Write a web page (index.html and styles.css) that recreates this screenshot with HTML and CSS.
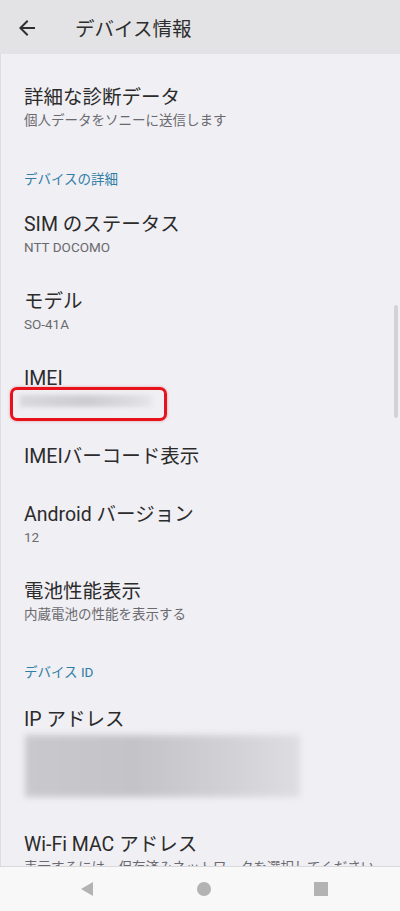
FILE: index.html
```html
<!DOCTYPE html>
<html lang="ja">
    <head>
        <meta charset="utf-8"/>
        <link rel="stylesheet" href="styles.css">
    </head>
    <body>
        <div class="screen">
            <div class="topbar">
                <svg class="back" width="24" height="24" viewBox="0 0 24 24">
                    <path d="M20 11H7.83l5.59-5.59L12 4l-8 8 8 8 1.41-1.41L7.83 13H20v-2z" fill="#2f2f2f"/>
                </svg>
                <div class="topbar_title">デバイス情報</div>
            </div>

            <div class="content">
                <div class="scroll_thumb"></div>

                <div class="item">
                    <div class="title">詳細な診断データ</div>
                    <div class="sub">個人データをソニーに送信します</div>
                </div>

                <div class="category">デバイスの詳細</div>

                <div class="item">
                    <div class="title">SIM のステータス</div>
                    <div class="sub">NTT DOCOMO</div>
                </div>
                <div class="item">
                    <div class="title">モデル</div>
                    <div class="sub">SO-41A</div>
                </div>
                <div class="item imei">
                    <div class="title">IMEI</div>
                    <div class="sub masked"><div class="blur_line"></div></div>
                    <div class="mark"></div>
                </div>
                <div class="item single">
                    <div class="title">IMEIバーコード表示</div>
                </div>
                <div class="item">
                    <div class="title">Android バージョン</div>
                    <div class="sub">12</div>
                </div>
                <div class="item">
                    <div class="title">電池性能表示</div>
                    <div class="sub">内蔵電池の性能を表示する</div>
                </div>

                <div class="category second">デバイス ID</div>

                <div class="item">
                    <div class="title">IP アドレス</div>
                    <div class="sub tall"><div class="blur_block"></div></div>
                </div>
                <div class="item">
                    <div class="title">Wi-Fi MAC アドレス</div>
                    <div class="sub">表示するには、保存済みネットワークを選択してください</div>
                </div>
            </div>

            <div class="navbar">
                <svg width="16" height="16" viewBox="0 0 16 16"><polygon points="14,1 14,15 2,8" fill="#b3b3b3"/></svg>
                <svg width="16" height="16" viewBox="0 0 16 16"><circle cx="8" cy="8" r="7" fill="#b3b3b3"/></svg>
                <svg width="16" height="16" viewBox="0 0 16 16"><rect x="1" y="1" width="14" height="14" fill="#b3b3b3"/></svg>
            </div>
        </div>
    </body>
</html>
```

FILE: styles.css
```css
html, body {
    margin: 0;
    padding: 0;
}

body {
    width: 400px;
    height: 911px;
    background-color: #f0eff4;
    font-family: Roboto, "Noto Sans CJK JP", sans-serif;
    color: #2b2b2b;
}

.screen {
    display: flex;
    flex-direction: column;
    height: 911px;
}

.topbar {
    display: flex;
    align-items: center;
    height: 54px;
    flex-shrink: 0;
    background-color: #e3e3e6;
}

.back {
    margin-left: 15px;
    margin-top: 2px;
}

.topbar_title {
    margin-left: 36px;
    font-size: 19.5px;
    color: #2d2d2d;
}

.content {
    position: relative;
    flex: 1;
    overflow: hidden;
    padding-top: 15px;
    border-left: 1px solid #dedde2;
}

.scroll_thumb {
    position: absolute;
    right: 2px;
    top: 251px;
    width: 4px;
    height: 113px;
    border-radius: 2px;
    background-color: #d3d3d6;
}

.item {
    position: relative;
    padding: 16px 24px 16px 23px;
}

.item.single {
    display: flex;
    align-items: center;
    min-height: 27px;
}

.title {
    font-size: 19.5px;
    line-height: 25px;
    color: #2b2b2b;
    white-space: nowrap;
}

.sub {
    font-size: 13.5px;
    line-height: 20px;
    color: #6a6a6e;
    white-space: nowrap;
}

.sub.masked {
    height: 16px;
}

.sub.tall {
    height: 65px;
}

.category {
    padding: 24px 24px 8px 23px;
    font-size: 13.5px;
    line-height: 18px;
    color: #2f7ea5;
}

.category.second {
    padding-top: 23px;
    padding-bottom: 10px;
}

/* blurred out values */
.blur_line {
    margin: 4px 0 0 -4px;
    width: 132px;
    height: 12px;
    background: linear-gradient(to right, #d9d9dd, #cdcdd1 50%, #dcdce0 85%, #e6e6ea);
    filter: blur(2px);
}

.blur_block {
    margin: 3px 0 0 1px;
    width: 275px;
    height: 62px;
    background: linear-gradient(to right, #c9c9cd, #c4c4c8 40%, #d2d2d6 75%, #dedee2);
    filter: blur(3px);
}

.mark {
    position: absolute;
    left: 9px;
    top: 37px;
    width: 151px;
    height: 28px;
    border: 3px solid #e8121c;
    border-radius: 7px;
    box-shadow: 0 0 3px rgba(200, 0, 0, 0.35);
}

.navbar {
    display: flex;
    align-items: center;
    justify-content: space-between;
    height: 45px;
    flex-shrink: 0;
    padding: 0 71px 0 79px;
    background-color: #f8f8f9;
    border-top: 1px solid #d9d9dc;
    box-sizing: border-box;
}
```
